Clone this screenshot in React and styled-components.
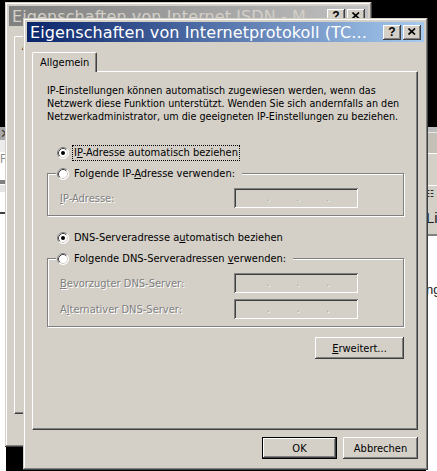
import React from 'react';
import styled, { createGlobalStyle, css } from 'styled-components';

const face = '#d4d0c8';

const GlobalStyle = createGlobalStyle`
  html, body {
    margin: 0;
    padding: 0;
    background: #000;
    overflow: hidden;
  }
  body {
    font-family: "DejaVu Sans Condensed", "Liberation Sans", Arial, sans-serif;
  }
`;

const raised = css`
  box-shadow: inset -1px -1px #404040, inset 1px 1px #fff, inset -2px -2px #808080, inset 2px 2px ${face};
`;

const sunken = css`
  box-shadow: inset 1px 1px #808080, inset -1px -1px #fff, inset 2px 2px #404040, inset -2px -2px ${face};
`;

const Desktop = styled.div`
  position: relative;
  width: 437px;
  height: 471px;
  background: #000;
  overflow: hidden;
`;

/* the explorer window sitting behind both dialogs */
const BehindApp = styled.div`
  position: absolute;
  left: 0;
  top: 127px;
  width: 437px;
  height: 344px;
  display: flex;
  justify-content: space-between;
`;

const LeftPane = styled.div`
  width: 6px;
  display: flex;
  flex-direction: column;
  background: #fff;
`;

const RightPane = styled.div`
  width: 11px;
  display: flex;
  flex-direction: column;
  background: #fff;
  overflow: hidden;
`;

const Band = styled.div`
  height: ${(p) => p.$h}px;
  background: ${(p) => p.$bg || face};
  border-top: ${(p) => (p.$line ? `1px solid ${p.$line}` : 'none')};
  box-sizing: border-box;
  color: ${(p) => p.$color || '#000'};
  font-family: "Liberation Sans", Arial, sans-serif;
  font-size: ${(p) => p.$size || 12}px;
  line-height: ${(p) => p.$h}px;
  white-space: nowrap;
  overflow: hidden;
`;

const Window = styled.div`
  position: absolute;
  z-index: ${(p) => p.$z};
  left: ${(p) => p.$x}px;
  top: ${(p) => p.$y}px;
  width: ${(p) => p.$w}px;
  height: ${(p) => p.$h}px;
  box-sizing: border-box;
  padding: 4px;
  background: ${face};
  box-shadow: inset -1px -1px #404040, inset 1px 1px ${face}, inset -2px -2px #808080, inset 2px 2px #fff;
  display: flex;
  flex-direction: column;
`;

const TitleBar = styled.div`
  height: 20px;
  flex-shrink: 0;
  display: flex;
  align-items: center;
  gap: 2px;
  padding: 0 3px 0 3px;
  background: ${(p) =>
    p.$active
      ? 'linear-gradient(to right, #0a246a, #a6caf0)'
      : 'linear-gradient(to right, #808080, #c0c0c0)'};
  color: ${(p) => (p.$active ? '#fff' : face)};
`;

const TitleText = styled.span`
  flex: 1;
  font-family: "DejaVu Sans", "Liberation Sans", sans-serif;
  font-size: 16px;
  letter-spacing: 0.1px;
  white-space: nowrap;
  overflow: hidden;
`;

const CaptionButton = styled.div`
  width: 18px;
  height: 15px;
  flex-shrink: 0;
  box-sizing: border-box;
  background: ${face};
  ${raised};
  display: flex;
  align-items: center;
  justify-content: center;
  color: #000;
  font-family: "Liberation Sans", Arial, sans-serif;
  font-weight: bold;
  font-size: 12px;
  padding-bottom: 1px;
`;

const Body = styled.div`
  flex: 1;
  display: flex;
  flex-direction: column;
  padding: 10px 6px 0 5px;
`;

const TabStrip = styled.div`
  display: flex;
  position: relative;
  z-index: 1;
  margin-bottom: -1px;
`;

const Tab = styled.div`
  height: 20px;
  box-sizing: border-box;
  padding: 0 7px 1px 7px;
  display: flex;
  align-items: center;
  font-size: 11px;
  background: ${face};
  border-left: 1px solid #fff;
  border-top: 1px solid #fff;
  border-right: 1px solid #404040;
  border-radius: 2px 2px 0 0;
  box-shadow: inset -1px 0 #808080;
`;

const TabPage = styled.div`
  height: 359px;
  box-sizing: border-box;
  border-left: 1px solid #fff;
  border-top: 1px solid #fff;
  border-right: 1px solid #404040;
  border-bottom: 1px solid #404040;
  box-shadow: inset -1px -1px #808080;
  padding: 12px 13px 0 14px;
  display: flex;
  flex-direction: column;
`;

const Intro = styled.p`
  margin: 0;
  font-size: 10.7px;
  line-height: 13px;
  color: #000;
  white-space: nowrap;
`;

const RadioRow = styled.div`
  height: 16px;
  margin-top: ${(p) => p.$mt || 0}px;
  padding-left: 10px;
  display: flex;
  align-items: center;
  gap: 3px;
  font-size: 11px;
  color: #000;
`;

const RadioLabel = styled.span`
  padding: 1px 1px;
  border: 1px dotted ${(p) => (p.$focus ? '#000' : 'transparent')};
  line-height: 12px;
  white-space: nowrap;
`;

const Group = styled.div`
  margin-top: 12px;
  border: 1px solid #808080;
  box-shadow: inset 1px 1px #fff, 1px 1px #fff;
  padding: 0 0 7px 12px;
  display: flex;
  flex-direction: column;
`;

const Legend = styled.div`
  align-self: flex-start;
  margin: -8px 0 0 -4px;
  padding: 0 5px 0 1px;
  background: ${face};
  height: 16px;
  display: flex;
  align-items: center;
  gap: 3px;
  font-size: 11px;
`;

const FieldRow = styled.div`
  margin-top: 6px;
  height: 20px;
  display: flex;
  align-items: center;
`;

const FieldLabel = styled.span`
  width: 174px;
  font-size: 11px;
  color: #808080;
  text-shadow: 1px 1px 0 #fff;
  white-space: nowrap;
`;

const IpField = styled.div`
  width: 124px;
  height: 20px;
  box-sizing: border-box;
  background: ${face};
  ${sunken};
  display: flex;
  justify-content: space-evenly;
  align-items: center;
  padding: 0 2px 0 6px;
`;

const IpDot = styled.span`
  font-size: 10px;
  line-height: 10px;
  color: #a0a0a0;
  text-shadow: 1px 1px 0 #fff;
`;

const PushButton = styled.div`
  width: ${(p) => p.$w || 75}px;
  height: 22px;
  box-sizing: border-box;
  background: ${face};
  ${raised};
  display: flex;
  align-items: center;
  justify-content: center;
  font-size: 11px;
  color: #000;
  ${(p) =>
    p.$default &&
    css`
      border: 1px solid #000;
    `}
`;

const MoreButton = styled(PushButton)`
  align-self: flex-end;
  margin-top: 10px;
`;

const ButtonRow = styled.div`
  margin-top: 7px;
  display: flex;
  justify-content: flex-end;
  gap: 6px;
`;

const Key = styled.u`
  text-decoration-thickness: 1px;
  text-underline-offset: 1px;
`;

const Radio = ({ checked }) => (
  <svg width="12" height="12" viewBox="0 0 12 12" style={{ flexShrink: 0 }}>
    <circle cx="6" cy="6" r="5.5" fill="#fff" />
    <path d="M2.11 9.89 A5.5 5.5 0 0 1 9.89 2.11" fill="none" stroke="#808080" />
    <path d="M9.89 2.11 A5.5 5.5 0 0 1 2.11 9.89" fill="none" stroke="#fff" />
    <path d="M2.82 9.18 A4.5 4.5 0 0 1 9.18 2.82" fill="none" stroke="#404040" />
    <path d="M9.18 2.82 A4.5 4.5 0 0 1 2.82 9.18" fill="none" stroke={face} />
    {checked && <circle cx="6" cy="6" r="2" fill="#000" />}
  </svg>
);

const CloseGlyph = () => (
  <svg width="8" height="7" viewBox="0 0 8 7">
    <path d="M0.5 0.5 L7 6.5 M7 0.5 L0.5 6.5" stroke="#000" strokeWidth="1.7" />
  </svg>
);

const Address = () => (
  <IpField>
    <IpDot>.</IpDot>
    <IpDot>.</IpDot>
    <IpDot>.</IpDot>
  </IpField>
);

const Dialog = ({ x, y, w, h, z, title, active, children }) => (
  <Window $x={x} $y={y} $w={w} $h={h} $z={z}>
    <TitleBar $active={active}>
      <TitleText>{title}</TitleText>
      <CaptionButton>?</CaptionButton>
      <CaptionButton>
        <CloseGlyph />
      </CaptionButton>
    </TitleBar>
    <Body>
      <TabStrip>
        <Tab>Allgemein</Tab>
      </TabStrip>
      <TabPage>{children}</TabPage>
      <ButtonRow>
        <PushButton $default>OK</PushButton>
        <PushButton>Abbrechen</PushButton>
      </ButtonRow>
    </Body>
  </Window>
);

const App = () => {
  return (
    <Desktop>
      <GlobalStyle />
      <BehindApp>
        <LeftPane>
          <Band $h={13} $bg="#a8a8a8" $color="#404040" $size={13}>✕</Band>
          <Band $h={12} $bg="#ececec" />
          <Band $h={14} $bg="#fff" $color="#909090">F</Band>
          <Band $h={14} $bg="#fff" />
          <Band $h={4} $bg="#808080" />
          <Band $h={8} $bg="#e4e4e4" $line="#fff" />
          <Band $h={20} $bg="#fff" />
          <Band $h={2} $bg="#404040" />
        </LeftPane>
        <RightPane>
          <Band $h={5} $bg="#bdbdbd" />
          <Band $h={21} $bg="#c4c0b8" $line="#e8e8e8" />
          <Band $h={32} $line="#fff" />
          <Band $h={17} $line="#fff" $size={9}>☷</Band>
          <Band $h={32} $size={15} $color="#202020">Lin</Band>
          <Band $h={2} $bg="#808080" />
          <Band $h={3} $bg="#fff" />
          <Band $h={44} $bg="#fff" />
          <Band $h={14} $bg="#fff" $size={13} $color="#202020">ng</Band>
        </RightPane>
      </BehindApp>

      <Dialog x={5} y={2} w={367} h={445} z={1} title="Eigenschaften von Internet ISDN - M..." />

      <Dialog x={23} y={18} w={405} h={452} z={2} title="Eigenschaften von Internetprotokoll (TC..." active>
        <Intro>
          IP-Einstellungen können automatisch zugewiesen werden, wenn das
          <br />
          Netzwerk diese Funktion unterstützt. Wenden Sie sich andernfalls an den
          <br />
          Netzwerkadministrator, um die geeigneten IP-Einstellungen zu beziehen.
        </Intro>

        <RadioRow $mt={22}>
          <Radio checked />
          <RadioLabel $focus>
            I<Key>P</Key>-Adresse automatisch beziehen
          </RadioLabel>
        </RadioRow>

        <Group>
          <Legend>
            <Radio />
            <RadioLabel>
              Folgende IP-<Key>A</Key>dresse verwenden:
            </RadioLabel>
          </Legend>
          <FieldRow>
            <FieldLabel>
              <Key>I</Key>P-Adresse:
            </FieldLabel>
            <Address />
          </FieldRow>
        </Group>

        <RadioRow $mt={14}>
          <Radio checked />
          <RadioLabel>
            DNS-Serveradresse a<Key>u</Key>tomatisch beziehen
          </RadioLabel>
        </RadioRow>

        <Group>
          <Legend>
            <Radio />
            <RadioLabel>
              Folgende DNS-Serveradressen <Key>v</Key>erwenden:
            </RadioLabel>
          </Legend>
          <FieldRow>
            <FieldLabel>
              <Key>B</Key>evorzugter DNS-Server:
            </FieldLabel>
            <Address />
          </FieldRow>
          <FieldRow>
            <FieldLabel>
              A<Key>l</Key>ternativer DNS-Server:
            </FieldLabel>
            <Address />
          </FieldRow>
        </Group>

        <MoreButton $w={89}>
          <span>
            <Key>E</Key>rweitert...
          </span>
        </MoreButton>
      </Dialog>
    </Desktop>
  );
};

export default App;
